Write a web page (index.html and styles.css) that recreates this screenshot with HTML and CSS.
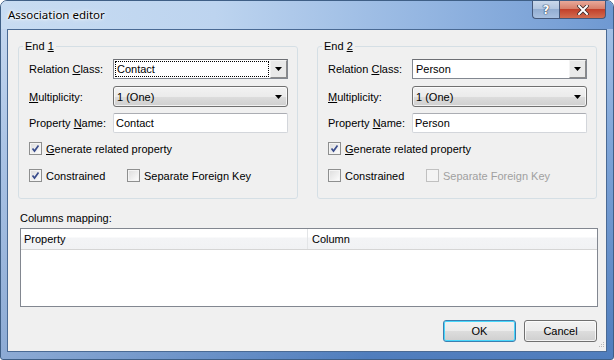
FILE: index.html
```html
<!DOCTYPE html>
<html>
<head>
<meta charset="utf-8">
<link rel="stylesheet" href="styles.css">
</head>
<body>
<div class="window">
  <div class="titlebar">
    <span class="title">Association editor</span>
    <div class="caption-buttons">
      <div class="cbtn help">?</div>
      <div class="cbtn close">
        <svg width="12" height="10" viewBox="0 0 12 10"><path d="M2 1 L10 9 M10 1 L2 9" stroke="#3a2a2a" stroke-width="3.6" stroke-linecap="square"/><path d="M2 1 L10 9 M10 1 L2 9" stroke="#ffffff" stroke-width="2" stroke-linecap="square"/></svg>
      </div>
    </div>
  </div>
  <div class="client">
    <div class="groups">
      <fieldset class="group">
        <legend>End <u>1</u></legend>
        <div class="inner">
          <div class="row r1">
            <span class="lbl">Relation <u>C</u>lass:</span>
            <div class="combo edit">
              <span class="val"><span class="focusrect">Contact</span></span>
              <span class="arrowbtn"><svg width="7" height="4" viewBox="0 0 7 4"><path d="M0 0 H7 L3.5 4 Z" fill="#000"/></svg></span>
            </div>
          </div>
          <div class="row r2">
            <span class="lbl"><u>M</u>ultiplicity:</span>
            <div class="combo list">
              <span class="val">1 (One)</span>
              <svg class="arr" width="7" height="4" viewBox="0 0 7 4"><path d="M0 0 H7 L3.5 4 Z" fill="#000"/></svg>
            </div>
          </div>
          <div class="row r3">
            <span class="lbl">Property <u>N</u>ame:</span>
            <div class="textbox">Contact</div>
          </div>
          <div class="row r4">
            <span class="chk on"></span><span class="ctext"><u>G</u>enerate related property</span>
          </div>
          <div class="row r5">
            <div class="citem first"><span class="chk on"></span><span class="ctext">Constrained</span></div>
            <div class="citem"><span class="chk"></span><span class="ctext">Separate Foreign Key</span></div>
          </div>
        </div>
      </fieldset>
      <fieldset class="group">
        <legend>End <u>2</u></legend>
        <div class="inner">
          <div class="row r1">
            <span class="lbl">Relation <u>C</u>lass:</span>
            <div class="combo edit">
              <span class="val"><span class="nofocus">Person</span></span>
              <span class="arrowbtn"><svg width="7" height="4" viewBox="0 0 7 4"><path d="M0 0 H7 L3.5 4 Z" fill="#000"/></svg></span>
            </div>
          </div>
          <div class="row r2">
            <span class="lbl"><u>M</u>ultiplicity:</span>
            <div class="combo list">
              <span class="val">1 (One)</span>
              <svg class="arr" width="7" height="4" viewBox="0 0 7 4"><path d="M0 0 H7 L3.5 4 Z" fill="#000"/></svg>
            </div>
          </div>
          <div class="row r3">
            <span class="lbl">Property <u>N</u>ame:</span>
            <div class="textbox">Person</div>
          </div>
          <div class="row r4">
            <span class="chk on"></span><span class="ctext"><u>G</u>enerate related property</span>
          </div>
          <div class="row r5">
            <div class="citem first"><span class="chk"></span><span class="ctext">Constrained</span></div>
            <div class="citem disabled"><span class="chk"></span><span class="ctext">Separate Foreign Key</span></div>
          </div>
        </div>
      </fieldset>
    </div>
    <div class="cm-label">Columns mapping:</div>
    <div class="listview">
      <div class="lv-header">
        <div class="col c1">Property</div>
        <div class="col c2">Column</div>
      </div>
    </div>
    <div class="buttons">
      <div class="btn default">OK</div>
      <div class="btn">Cancel</div>
    </div>
    <svg class="grip" width="10" height="10" viewBox="0 0 10 10">
      <g fill="#b8b8b8"><rect x="8" y="2" width="1" height="1"/><rect x="6" y="4" width="1" height="1"/><rect x="8" y="4" width="1" height="1"/><rect x="4" y="6" width="1" height="1"/><rect x="6" y="6" width="1" height="1"/><rect x="8" y="6" width="1" height="1"/></g>
    </svg>
  </div>
</div>
</body>
</html>
```
FILE: styles.css
```css
html, body {
  margin: 0;
  padding: 0;
  background: #ffffff;
}
body {
  width: 614px;
  height: 360px;
  overflow: hidden;
}
.window {
  width: 614px;
  height: 360px;
  box-sizing: border-box;
  border: 1px solid #3f5f86;
  border-radius: 7px 7px 3px 3px;
  background:
    linear-gradient(90deg, rgba(255,255,255,0.35) 0%, rgba(255,255,255,0) 60%),
    linear-gradient(180deg, #b9d1ee 0%, #a3c0e6 8%, #7fa5d8 40%, #4f7dbd 100%);
  font-family: "Liberation Sans", Arial, sans-serif;
  font-size: 11px;
  color: #000;
  overflow: hidden;
}
.titlebar {
  height: 28px;
  display: flex;
  align-items: flex-start;
  background: linear-gradient(90deg, #c8dcf2 0%, #bdd4ef 35%, #93b5e1 70%, #6f99d2 100%);
}
.title {
  font-family: "Noto Sans", "Open Sans", sans-serif;
  font-size: 11.5px;
  line-height: 16px;
  padding: 6px 0 0 7px;
  color: #000;
  text-shadow: 0 0 6px #fff, 0 0 3px #fff, 0 0 2px #fff;
}
.caption-buttons {
  margin-left: auto;
  margin-right: 7px;
  display: flex;
}
.cbtn {
  height: 18px;
  box-sizing: border-box;
  border: 1px solid #44587a;
  border-top: none;
  display: flex;
  align-items: center;
  justify-content: center;
}
.help {
  width: 27px;
  border-right: none;
  border-radius: 0 0 0 4px;
  background: linear-gradient(180deg, #c9d8eb 0%, #b2c6e0 45%, #93aed2 50%, #a8c0e0 100%);
  color: #fff;
  font-family: "DejaVu Sans", sans-serif;
  font-weight: bold;
  font-size: 12px;
  text-shadow: 0 0 1px #2d3d58, 0 0 1px #2d3d58, 0 0 1px #2d3d58;
}
.close {
  width: 47px;
  border-radius: 0 0 4px 0;
  background: linear-gradient(180deg, #e8a99a 0%, #d7806b 45%, #c2412b 50%, #d26c50 100%);
}
.client {
  position: relative;
  margin-left: 6px;
  width: 600px;
  height: 323px;
  box-sizing: border-box;
  border: 1px solid #4a6a94;
  background: #f0f0f0;
  padding: 10px 0 0 10px;
}
.groups {
  display: flex;
  gap: 19px;
}
.group {
  margin: 0;
  padding: 0;
  width: 280px;
  box-sizing: border-box;
  border: 1px solid #d5dfe5;
  border-radius: 3px;
  min-width: 0;
}
.group legend {
  margin-left: 4px;
  padding: 0 2px;
  line-height: 13px;
  font-size: 11px;
}
.inner {
  padding: 0 9px 16px 10px;
}
.row {
  display: flex;
  align-items: center;
}
.r1 { margin-top: 6px; height: 20px; }
.r2 { margin-top: 7px; height: 21px; }
.r3 { margin-top: 6px; height: 20px; }
.r4 { margin-top: 9px; height: 13px; }
.r5 { margin-top: 14px; height: 13px; }
.lbl {
  width: 84px;
  flex: none;
  white-space: nowrap;
}
.combo, .textbox {
  width: 175px;
  height: 100%;
  box-sizing: border-box;
  display: flex;
  align-items: center;
}
.combo.edit {
  border: 1px solid #828790;
  border-top-color: #6d6f74;
  background: #fff;
}
.combo.edit .val {
  flex: 1;
  height: 100%;
  padding: 1px;
  box-sizing: border-box;
  display: flex;
}
.focusrect, .nofocus {
  flex: 1;
  display: flex;
  align-items: center;
  padding-left: 1px;
  box-sizing: border-box;
  border: 1px dotted transparent;
}
.focusrect {
  border-color: #000;
}
.arrowbtn {
  width: 17px;
  height: 18px;
  box-sizing: border-box;
  flex: none;
  border: 1px solid;
  border-color: #f4f4f4 #8a8a8a #8a8a8a #f4f4f4;
  background: #e9e9e9;
  display: flex;
  align-items: center;
  justify-content: center;
}
.combo.list {
  border: 1px solid #707070;
  border-radius: 3px;
  background: linear-gradient(180deg, #f2f2f2 0%, #ebebeb 50%, #dddddd 50%, #cfcfcf 100%);
  box-shadow: inset 0 0 0 1px rgba(255,255,255,0.7);
  padding-left: 3px;
}
.combo.list .val { flex: 1; }
.combo.list .arr { margin-right: 5px; }
.textbox {
  border: 1px solid #d3d6db;
  border-top-color: #abadb3;
  border-radius: 2px;
  background: #fff;
  padding-left: 2px;
}
.chk {
  width: 13px;
  height: 13px;
  box-sizing: border-box;
  flex: none;
  border: 1px solid #8e8f8f;
  background: linear-gradient(135deg, #dcdcdc 0%, #f0f0f0 60%, #ffffff 100%);
  box-shadow: inset 0 0 0 1px #f4f4f4;
  position: relative;
}
.chk.on {
  background-image:
    url("data:image/svg+xml;utf8,<svg xmlns='http://www.w3.org/2000/svg' width='11' height='11' viewBox='0 0 11 11'><path d='M2.5 5.5 L4.5 8 L8.5 2.5' fill='none' stroke='%23394c8c' stroke-width='1.7'/></svg>"),
    linear-gradient(135deg, #dcdcdc 0%, #f0f0f0 60%, #ffffff 100%);
}
.ctext {
  margin-left: 4px;
  white-space: nowrap;
}
.citem {
  display: flex;
  align-items: center;
}
.citem.first {
  width: 98px;
}
.citem.disabled .chk {
  border-color: #c0c0c0;
  background: #f4f4f4;
}
.citem.disabled .ctext {
  color: #a0a0a0;
}
.cm-label {
  margin: 13px 0 0 2px;
  line-height: 13px;
}
.listview {
  margin: 3px 0 0 2px;
  width: 578px;
  height: 79px;
  box-sizing: border-box;
  border: 1px solid #828790;
  background: #fff;
}
.lv-header {
  display: flex;
  height: 21px;
  box-sizing: border-box;
  border-bottom: 1px solid #d5d5d5;
  background: linear-gradient(180deg, #ffffff 0%, #ffffff 40%, #f3f4f6 45%, #f1f2f4 100%);
}
.col {
  display: flex;
  align-items: center;
  padding-left: 3px;
}
.c1 {
  width: 287px;
  box-sizing: border-box;
  border-right: 1px solid #e3e5e7;
}
.c2 {
  padding-left: 4px;
}
.buttons {
  margin-top: 13px;
  width: 579px;
  display: flex;
  justify-content: flex-end;
  gap: 8px;
}
.btn {
  width: 73px;
  height: 22px;
  box-sizing: border-box;
  border: 1px solid #707070;
  border-radius: 3px;
  background: linear-gradient(180deg, #f2f2f2 0%, #ebebeb 50%, #dddddd 50%, #cfcfcf 100%);
  box-shadow: inset 0 0 0 1px rgba(255,255,255,0.75);
  display: flex;
  align-items: center;
  justify-content: center;
}
.btn.default {
  border-color: #3c7fb1;
  box-shadow: inset 0 0 0 1px #48d7fb;
}
.grip {
  position: absolute;
  right: 1px;
  bottom: 1px;
}
```
